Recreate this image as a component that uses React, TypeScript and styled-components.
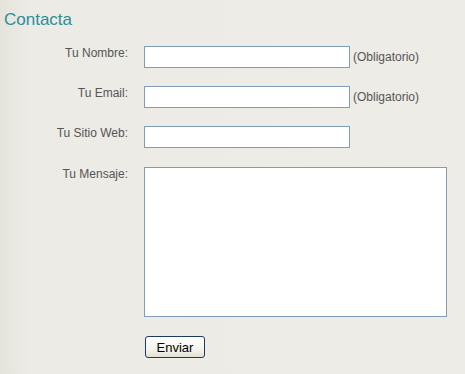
import styled, { createGlobalStyle } from 'styled-components'

const GlobalStyle = createGlobalStyle`
  html, body {
    margin: 0;
    padding: 0;
  }
  body {
    background: linear-gradient(to right, #e4e3dc 0px, #ecebe5 28px, #edece6 100%);
    font-family: "Liberation Sans", Arial, sans-serif;
    min-height: 374px;
  }
`

export default function App() {
  return (
    <Page>
      <GlobalStyle />
      <Title>Contacta</Title>
      <Form onSubmit={(e) => e.preventDefault()}>
        <Label htmlFor="nombre">Tu Nombre:</Label>
        <Field>
          <TextInput id="nombre" type="text" />
          <Note>(Obligatorio)</Note>
        </Field>

        <Label htmlFor="email">Tu Email:</Label>
        <Field>
          <TextInput id="email" type="text" />
          <Note>(Obligatorio)</Note>
        </Field>

        <Label htmlFor="web">Tu Sitio Web:</Label>
        <Field>
          <TextInput id="web" type="text" />
        </Field>

        <Label htmlFor="mensaje" offset={1}>Tu Mensaje:</Label>
        <Field offset={1}>
          <MessageBox id="mensaje" />
        </Field>

        <Spacer />
        <Field offset={1}>
          <SendBtn type="submit">Enviar</SendBtn>
        </Field>
      </Form>
    </Page>
  )
}

const Page = styled.div`
  padding: 10px 0 0 4px;
`
const Title = styled.h2`
  margin: 0;
  font-size: 17px;
  line-height: 20px;
  font-weight: normal;
  color: #2b8e9b;
`
const Form = styled.form`
  display: grid;
  grid-template-columns: 124px 1fr;
  column-gap: 16px;
  row-gap: 18px;
  margin-top: 16px;
`
const Label = styled.label<{ offset?: number }>`
  text-align: right;
  font-size: 12px;
  line-height: 14px;
  color: #555;
  margin-top: ${(p) => p.offset ?? 0}px;
`
const Field = styled.div<{ offset?: number }>`
  display: flex;
  align-items: flex-end;
  margin-top: ${(p) => p.offset ?? 0}px;
`
const TextInput = styled.input`
  box-sizing: border-box;
  width: 206px;
  height: 22px;
  margin: 0;
  border: 1px solid #7f9db9;
  background: #fff;
  padding: 2px 3px;
  font-family: "Liberation Sans", Arial, sans-serif;
  font-size: 12px;
`
const Note = styled.span`
  margin-left: 3px;
  margin-bottom: 4px;
  font-size: 12px;
  line-height: 14px;
  color: #555;
`
const MessageBox = styled.textarea`
  box-sizing: border-box;
  width: 303px;
  height: 150px;
  margin: 0;
  border: 1px solid #7f9db9;
  background: #fff;
  resize: none;
  font-family: "Liberation Sans", Arial, sans-serif;
  font-size: 12px;
`
const Spacer = styled.div``
const SendBtn = styled.button`
  box-sizing: border-box;
  width: 60px;
  height: 22px;
  margin-left: 1px;
  padding: 0;
  border: 1px solid #1c3a64;
  border-radius: 3px;
  background: linear-gradient(#ffffff, #f4f3ee 60%, #e2e0d6);
  font-family: "Liberation Sans", Arial, sans-serif;
  font-size: 13px;
  color: #000;
  cursor: pointer;
`
